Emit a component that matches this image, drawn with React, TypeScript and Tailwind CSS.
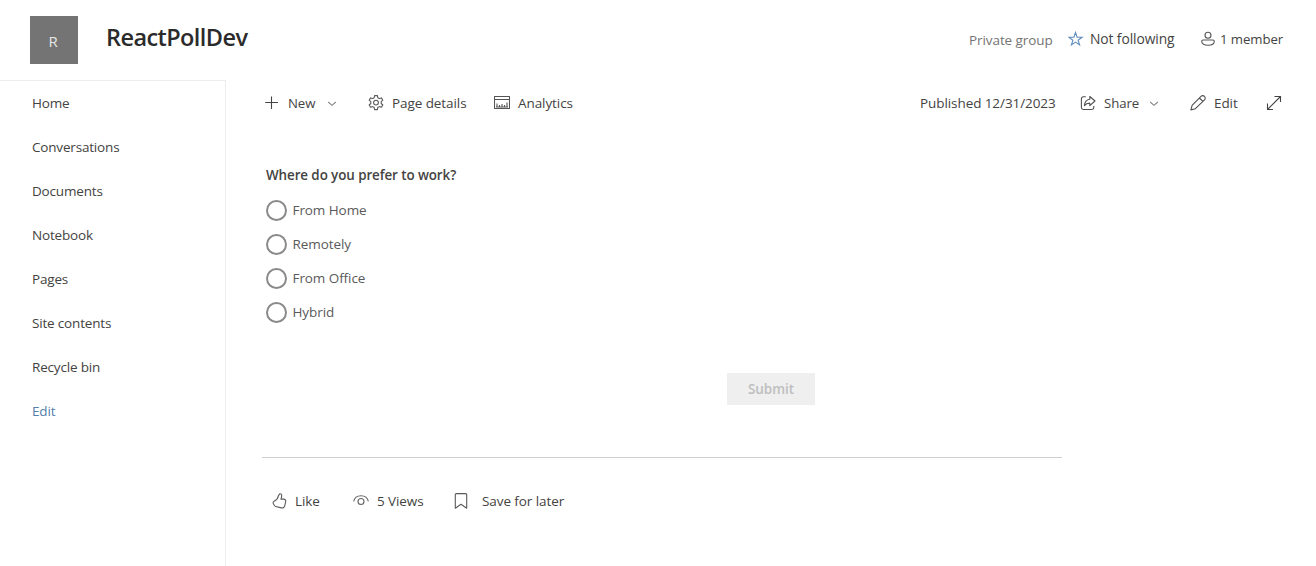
import type { ReactNode } from "react";

const navItems = ["Home", "Conversations", "Documents", "Notebook", "Pages", "Site contents", "Recycle bin"];
const choices = ["From Home", "Remotely", "From Office", "Hybrid"];

function Icon({ className, children }: { className: string; children: ReactNode }) {
  return (
    <svg
      viewBox="0 0 16 16"
      className={`size-4 shrink-0 ${className}`}
      fill="none"
      stroke="currentColor"
      strokeWidth="1.1"
      strokeLinejoin="round"
      aria-hidden="true"
    >
      {children}
    </svg>
  );
}

const PlusIcon = () => (
  <Icon className="text-[#444]">
    <path d="M7.5 1.500v12.500M1.200 7.500h12.800" />
  </Icon>
);

const ChevronIcon = () => (
  <Icon className="text-[#888]">
    <path d="M4.200 7l3.800 3.400L11.800 7" />
  </Icon>
);

const GearIcon = () => (
  <Icon className="text-[#5a5a5a]">
    <path d="M6.200 2.700 6.600.6h2.800l.4 2.100 1.500.9 2.100-.7 1.400 2.300-1.600 1.500v1.800l1.600 1.500-1.400 2.300-2.100-.7-1.500.9-.4 2.100H6.600l-.4-2.100-1.500-.9-2.100.7L1.200 10l1.600-1.500V6.700L1.200 5.200l1.400-2.300 2.100.7z" />
    <circle cx="8" cy="7.600" r="2.400" />
  </Icon>
);

const AnalyticsIcon = () => (
  <Icon className="text-[#555]">
    <path d="M.5 1.500h15v12H.5zM.5 4.500h15M3 8.500v3.500M5.500 10v2M8 9v3M10.500 10v2M13 7.500v4.500M2 12h12" />
  </Icon>
);

const StarIcon = () => (
  <Icon className="text-[#5f8cbd]">
    <path strokeLinejoin="miter" d="m7.500 1.500 1.600 4.700h5l-4 3 1.500 4.700-4.100-2.800-4.100 2.800 1.500-4.700-4-3h5z" />
  </Icon>
);

const PersonIcon = () => (
  <Icon className="text-[#555]">
    <circle cx="8" cy="4.200" r="3" />
    <path d="M3.100 9h9.800c.9 0 1.400.5 1.400 1.300 0 2.500-2.600 4-6.300 4s-6.300-1.500-6.300-4c0-.8.500-1.300 1.400-1.300z" />
  </Icon>
);

const ShareIcon = () => (
  <Icon className="text-[#505050]">
    <path d="M5.800 1.800H3.300a1.900 1.900 0 0 0-1.900 1.900v8.900c0 1 .8 1.900 1.900 1.900h8.600c1 0 1.900-.8 1.900-1.900v-1.500" />
    <path d="M9.800 1.500 15 6l-5.200 4.600V8.100c-2.400 0-4 .6-5.400 2.500.3-3.500 2.200-6 5.400-6.400z" />
  </Icon>
);

const PencilIcon = () => (
  <Icon className="text-[#505050]">
    <path d="M11 1.400a2.350 2.350 0 0 1 3.500 0 2.350 2.350 0 0 1 0 3.400L5.400 13.700.9 14.900l1.200-4.600zM9.400 3l3.500 3.400" />
  </Icon>
);

const ExpandIcon = () => (
  <Icon className="text-[#444]">
    <path strokeLinejoin="miter" d="M8.500 1.500h6V7M1.500 8.500v6H7M14.500 1.500l-13 13" />
  </Icon>
);

const LikeIcon = () => (
  <Icon className="text-[#5a5a5a]">
    <path d="M8.700.8c1.300-.2 2 .7 2 1.900 0 1.200-.4 2.400-.8 3.400h2.800c1.400 0 2.300 1.100 2 2.400l-.9 4.100c-.4 1.700-1.700 2.700-3.400 2.300l-5.700-1.400c-.8-.2-1.300-.7-1.600-1.400l-.9-1.800c-.4-.9 0-1.700.9-2.100C5.700 7.100 6.800 5.500 7.500 2.600z" />
  </Icon>
);

const EyeIcon = () => (
  <Icon className="text-[#666]">
    <path d="M.6 8.300C1.400 4.900 4.400 2.700 8 2.700s6.600 2.200 7.400 5.600" />
    <circle cx="8" cy="8.500" r="3" />
  </Icon>
);

const BookmarkIcon = () => (
  <Icon className="text-[#5a5a5a]">
    <path d="M3.300.6h9.400c.6 0 1 .4 1 1v13.600L8 11.200l-5.700 4V1.600c0-.6.400-1 1-1z" />
  </Icon>
);

export default function App() {
  return (
    <div className="flex h-[566px] w-full flex-col overflow-hidden bg-white font-['Open_Sans','Noto_Sans',sans-serif] text-[13.5px] leading-5 tracking-[-0.08px] whitespace-nowrap text-[#444342]">
      <header className="flex h-20 shrink-0 items-center pl-[30px]">
        <div className="flex size-12 items-center justify-center bg-[#747474] pr-0.5 pt-0.5 text-[15px] text-[#e6e6e6]">
          R
        </div>
        <h1 className="mb-1.5 ml-7 text-[23.5px] leading-8 font-semibold tracking-[-0.58px] text-[#2b2b2b]">
          ReactPollDev
        </h1>
        <div className="mb-0.5 ml-auto flex items-center pr-[33px]">
          <span className="mt-0.5 w-[99px] text-[#747474]">Private group</span>
          <StarIcon />
          <span className="ml-1.5 w-[110px] text-[13.8px]">Not following</span>
          <PersonIcon />
          <span className="ml-1 w-[63px] text-[13.2px]">1 member</span>
        </div>
      </header>

      <div className="flex min-h-0 flex-1">
        <nav className="w-[226px] shrink-0 border-t border-r border-[#ededed] tracking-[-0.18px]">
          {navItems.map((label) => (
            <a key={label} className="flex h-11 items-center pl-8">
              {label}
            </a>
          ))}
          <a className="flex h-11 items-center pl-8 text-[#5580ab]">Edit</a>
        </nav>

        <main className="min-w-0 flex-1 pl-9">
          <div className="flex h-[46px] items-center pr-[34px] pl-0.5">
            <PlusIcon />
            <span className="ml-2 w-[36px] text-[13.2px]">New</span>
            <ChevronIcon />
            <span className="w-7" />
            <GearIcon />
            <span className="ml-2 w-[102px]">Page details</span>
            <AnalyticsIcon />
            <span className="ml-2">Analytics</span>
            <span className="ml-auto w-[160px]">Published 12/31/2023</span>
            <ShareIcon />
            <span className="ml-2 w-[42px] text-[13.2px]">Share</span>
            <ChevronIcon />
            <span className="w-7" />
            <PencilIcon />
            <span className="ml-2 w-[52px]">Edit</span>
            <ExpandIcon />
          </div>

          <section className="w-[800px] pt-[39px]">
            <h2 className="mb-2 pl-1 text-[13.4px] font-semibold">Where do you prefer to work?</h2>
            {choices.map((choice) => (
              <label key={choice} className="flex h-[34px] items-center pl-1 text-[#5a5a5a]">
                <span className="mr-1.5 size-[21px] -ml-[0.5px] rounded-full border-2 border-[#8a8a8a]" />
                {choice}
              </label>
            ))}
            <div className="mt-11 pl-[465px]">
              <button disabled className="h-8 w-[88px] bg-[#efefef] font-semibold text-[#bebebe]">
                Submit
              </button>
            </div>
          </section>

          <footer className="mt-[52px] flex w-[800px] items-center border-t border-[#cfcfcf] pt-[33px] pl-[9px]">
            <LikeIcon />
            <span className="ml-2 w-[58px]">Like</span>
            <EyeIcon />
            <span className="ml-2 w-[76px]">5 Views</span>
            <BookmarkIcon />
            <span className="ml-[13px]">Save for later</span>
          </footer>
        </main>
      </div>
    </div>
  );
}
